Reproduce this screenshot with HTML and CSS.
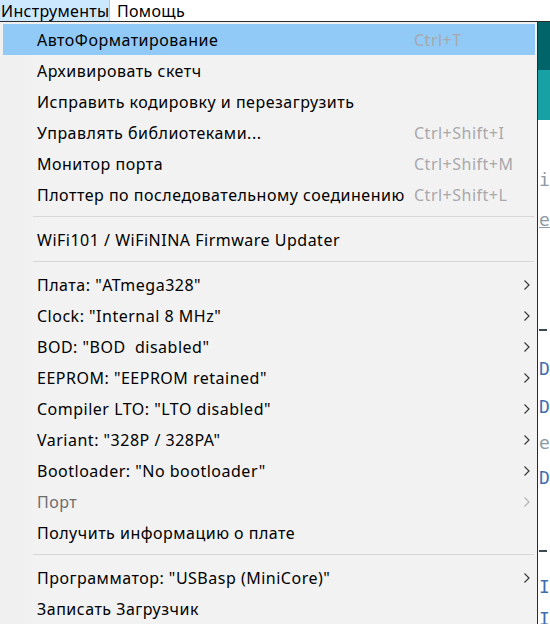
FILE: index.html
```html
<!DOCTYPE html>
<html lang="ru">
<head>
<meta charset="utf-8">
<link rel="stylesheet" href="styles.css">
</head>
<body>
<div class="menubar">
  <div class="mb-item mb-active">Инструменты</div>
  <div class="mb-item">Помощь</div>
</div>
<div class="main">
  <div class="menu">
    <div class="item hl"><span class="label">АвтоФорматирование</span><span class="sc">Ctrl+T</span><span class="ar"></span></div>
    <div class="item"><span class="label">Архивировать скетч</span><span class="sc"></span><span class="ar"></span></div>
    <div class="item"><span class="label">Исправить кодировку и перезагрузить</span><span class="sc"></span><span class="ar"></span></div>
    <div class="item"><span class="label">Управлять библиотеками...</span><span class="sc">Ctrl+Shift+I</span><span class="ar"></span></div>
    <div class="item"><span class="label">Монитор порта</span><span class="sc">Ctrl+Shift+M</span><span class="ar"></span></div>
    <div class="item"><span class="label">Плоттер по последовательному соединению</span><span class="sc">Ctrl+Shift+L</span><span class="ar"></span></div>
    <div class="sep"></div>
    <div class="item"><span class="label">WiFi101 / WiFiNINA Firmware Updater</span><span class="sc"></span><span class="ar"></span></div>
    <div class="sep"></div>
    <div class="item"><span class="label">Плата: "ATmega328"</span><span class="sc"></span><span class="ar"><svg viewBox="0 0 8 12" class="chev"><path d="M1.5 1.5 L6 6 L1.5 10.5"/></svg></span></div>
    <div class="item"><span class="label">Clock: "Internal 8 MHz"</span><span class="sc"></span><span class="ar"><svg viewBox="0 0 8 12" class="chev"><path d="M1.5 1.5 L6 6 L1.5 10.5"/></svg></span></div>
    <div class="item"><span class="label">BOD: "BOD&nbsp; disabled"</span><span class="sc"></span><span class="ar"><svg viewBox="0 0 8 12" class="chev"><path d="M1.5 1.5 L6 6 L1.5 10.5"/></svg></span></div>
    <div class="item"><span class="label">EEPROM: "EEPROM retained"</span><span class="sc"></span><span class="ar"><svg viewBox="0 0 8 12" class="chev"><path d="M1.5 1.5 L6 6 L1.5 10.5"/></svg></span></div>
    <div class="item"><span class="label">Compiler LTO: "LTO disabled"</span><span class="sc"></span><span class="ar"><svg viewBox="0 0 8 12" class="chev"><path d="M1.5 1.5 L6 6 L1.5 10.5"/></svg></span></div>
    <div class="item"><span class="label">Variant: "328P / 328PA"</span><span class="sc"></span><span class="ar"><svg viewBox="0 0 8 12" class="chev"><path d="M1.5 1.5 L6 6 L1.5 10.5"/></svg></span></div>
    <div class="item"><span class="label">Bootloader: "No bootloader"</span><span class="sc"></span><span class="ar"><svg viewBox="0 0 8 12" class="chev"><path d="M1.5 1.5 L6 6 L1.5 10.5"/></svg></span></div>
    <div class="item disabled"><span class="label">Порт</span><span class="sc"></span><span class="ar"><svg viewBox="0 0 8 12" class="chev"><path d="M1.5 1.5 L6 6 L1.5 10.5"/></svg></span></div>
    <div class="item"><span class="label">Получить информацию о плате</span><span class="sc"></span><span class="ar"></span></div>
    <div class="sep"></div>
    <div class="item"><span class="label">Программатор: "USBasp (MiniCore)"</span><span class="sc"></span><span class="ar"><svg viewBox="0 0 8 12" class="chev"><path d="M1.5 1.5 L6 6 L1.5 10.5"/></svg></span></div>
    <div class="item"><span class="label">Записать Загрузчик</span><span class="sc"></span><span class="ar"></span></div>
  </div>
  <div class="editor">
    <div class="bar-dark"></div>
    <div class="bar-light"></div>
    <div class="code">
      <div class="ln l1 c-gray">i</div>
      <div class="ln l2 c-gray u">e</div>
      <div class="ln l3"><span class="dash"></span></div>
      <div class="ln l4 c-blue">D</div>
      <div class="ln l5 c-blue">D</div>
      <div class="ln l6 c-gray">e</div>
      <div class="ln l7 c-blue">D</div>
      <div class="ln l8"><span class="dash"></span></div>
      <div class="ln l9 c-blue">I</div>
      <div class="ln l10 c-blue">I</div>
    </div>
  </div>
</div>
</body>
</html>
```

FILE: styles.css
```css
html, body {
  margin: 0;
  padding: 0;
}
body {
  width: 550px;
  height: 624px;
  overflow: hidden;
  background: #ffffff;
  font-family: "Noto Sans", "Open Sans", sans-serif;
  font-size: 16px;
  letter-spacing: 0.5px;
  color: #000;
}
.menubar {
  height: 21px;
  display: flex;
  align-items: stretch;
  background: #ffffff;
  letter-spacing: 0.3px;
}
.mb-item {
  display: flex;
  align-items: center;
  padding: 0 6px 0 7px;
  line-height: 20px;
}
.mb-active {
  background: #cce8ff;
  border-right: 1px solid #99d1ff;
  padding: 0 0 0 1px;
  width: 110px;
  box-sizing: border-box;
}
.main {
  display: flex;
  height: 603px;
  border-top: 1px solid #2b2b2b;
}
.menu {
  width: 537px;
  flex: none;
  background: #f2f2f2;
  border-right: 1px solid #2b2b2b;
  padding-top: 2px;
  box-sizing: content-box;
  background-image: linear-gradient(to right, #f0f0f0 0, #f0f0f0 31px, #f2f2f2 31px);
}
.item {
  height: 31px;
  margin: 0 2px 0 3px;
  display: grid;
  grid-template-columns: 411px 1fr 12px;
  align-items: center;
  white-space: nowrap;
}
.item.hl {
  background: #91c9f7;
}
.label {
  padding-left: 34px;
}
.sc {
  color: #a8a8ac;
}
.ar {
  display: flex;
  align-items: center;
  justify-content: flex-start;
}
.chev {
  width: 8px;
  height: 12px;
  fill: none;
  stroke: #3a3a3a;
  stroke-width: 1.2;
}
.disabled .label {
  color: #6d6d6d;
}
.disabled .chev {
  stroke: #b4b4b4;
}
.sep {
  height: 14px;
  box-sizing: border-box;
  padding-top: 6px;
  margin: 0 3px 0 33px;
}
.sep::before {
  content: "";
  display: block;
  height: 1px;
  background: #d7d7d7;
}
.editor {
  flex: 1;
  overflow: hidden;
  display: flex;
  flex-direction: column;
  background: #fff;
}
.bar-dark {
  height: 48px;
  background: #006468;
  flex: none;
}
.bar-light {
  height: 50px;
  background: #17a1a5;
  flex: none;
}
.code {
  font-family: "DejaVu Sans Mono", monospace;
  font-size: 18px;
  letter-spacing: 0;
  line-height: 20px;
  padding-left: 1px;
  display: flex;
  flex-direction: column;
}
.ln {
  height: 20px;
  flex: none;
}
.c-gray { color: #8c9aa6; }
.c-blue { color: #3f6fb0; }
.u { text-decoration: underline; }
.dash {
  display: inline-block;
  width: 8px;
  height: 2px;
  background: #3c4a50;
  vertical-align: middle;
}
.l1 { margin-top: 50px; }
.l2 { margin-top: 20px; }
.l3 { margin-top: 89px; }
.l4 { margin-top: 20px; }
.l5 { margin-top: 18px; }
.l6 { margin-top: 16px; }
.l7 { margin-top: 15px; }
.l8 { margin-top: 52px; }
.l9 { margin-top: 17px; }
.l10 { margin-top: 12px; }
```
